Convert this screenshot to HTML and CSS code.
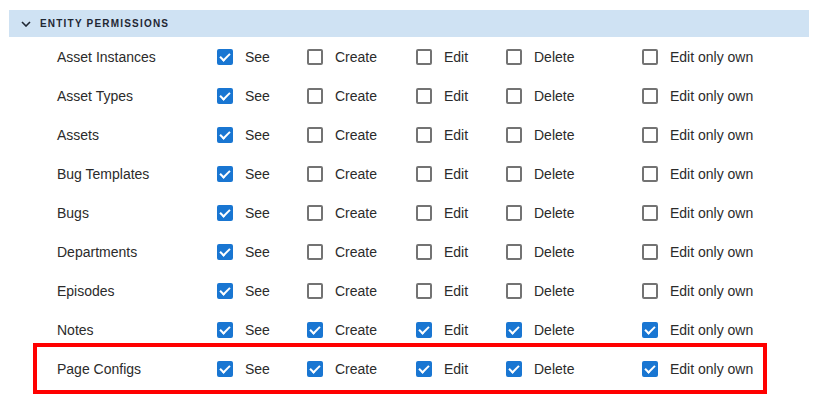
FILE: index.html
```html
<!DOCTYPE html>
<html lang="en">
<head>
  <meta charset="UTF-8">
  <meta name="viewport" content="width=device-width, initial-scale=1.0">
  <title>Entity Permissions</title>
  <link rel="stylesheet" href="styles.css">
</head>
<body>
  <div class="panel">
    <div class="panel-header">
      <svg class="chevron" width="10" height="6" viewBox="0 0 10 6"><path d="M1 1 L5 5 L9 1" fill="none" stroke="#1f2733" stroke-width="1.6"/></svg>
      <span>ENTITY PERMISSIONS</span>
    </div>
    <div class="rows">
      <div class="row">
        <div class="label">Asset Instances</div>
        <label class="perm"><span class="box on"></span>See</label>
        <label class="perm"><span class="box"></span>Create</label>
        <label class="perm"><span class="box"></span>Edit</label>
        <label class="perm"><span class="box"></span>Delete</label>
        <label class="perm"><span class="box"></span>Edit only own</label>
      </div>
      <div class="row">
        <div class="label">Asset Types</div>
        <label class="perm"><span class="box on"></span>See</label>
        <label class="perm"><span class="box"></span>Create</label>
        <label class="perm"><span class="box"></span>Edit</label>
        <label class="perm"><span class="box"></span>Delete</label>
        <label class="perm"><span class="box"></span>Edit only own</label>
      </div>
      <div class="row">
        <div class="label">Assets</div>
        <label class="perm"><span class="box on"></span>See</label>
        <label class="perm"><span class="box"></span>Create</label>
        <label class="perm"><span class="box"></span>Edit</label>
        <label class="perm"><span class="box"></span>Delete</label>
        <label class="perm"><span class="box"></span>Edit only own</label>
      </div>
      <div class="row">
        <div class="label">Bug Templates</div>
        <label class="perm"><span class="box on"></span>See</label>
        <label class="perm"><span class="box"></span>Create</label>
        <label class="perm"><span class="box"></span>Edit</label>
        <label class="perm"><span class="box"></span>Delete</label>
        <label class="perm"><span class="box"></span>Edit only own</label>
      </div>
      <div class="row">
        <div class="label">Bugs</div>
        <label class="perm"><span class="box on"></span>See</label>
        <label class="perm"><span class="box"></span>Create</label>
        <label class="perm"><span class="box"></span>Edit</label>
        <label class="perm"><span class="box"></span>Delete</label>
        <label class="perm"><span class="box"></span>Edit only own</label>
      </div>
      <div class="row">
        <div class="label">Departments</div>
        <label class="perm"><span class="box on"></span>See</label>
        <label class="perm"><span class="box"></span>Create</label>
        <label class="perm"><span class="box"></span>Edit</label>
        <label class="perm"><span class="box"></span>Delete</label>
        <label class="perm"><span class="box"></span>Edit only own</label>
      </div>
      <div class="row">
        <div class="label">Episodes</div>
        <label class="perm"><span class="box on"></span>See</label>
        <label class="perm"><span class="box"></span>Create</label>
        <label class="perm"><span class="box"></span>Edit</label>
        <label class="perm"><span class="box"></span>Delete</label>
        <label class="perm"><span class="box"></span>Edit only own</label>
      </div>
      <div class="row">
        <div class="label">Notes</div>
        <label class="perm"><span class="box on"></span>See</label>
        <label class="perm"><span class="box on"></span>Create</label>
        <label class="perm"><span class="box on"></span>Edit</label>
        <label class="perm"><span class="box on"></span>Delete</label>
        <label class="perm"><span class="box on"></span>Edit only own</label>
      </div>
      <div class="highlight">
        <div class="row">
          <div class="label">Page Configs</div>
          <label class="perm"><span class="box on"></span>See</label>
          <label class="perm"><span class="box on"></span>Create</label>
          <label class="perm"><span class="box on"></span>Edit</label>
          <label class="perm"><span class="box on"></span>Delete</label>
          <label class="perm"><span class="box on"></span>Edit only own</label>
        </div>
      </div>
    </div>
  </div>
</body>
</html>
```

FILE: styles.css
```css
body {
  margin: 0;
  background: #fff;
  font-family: "Liberation Sans", Arial, sans-serif;
  color: #2b2b2b;
}
.panel {
  width: 800px;
  padding: 10px 0 0 9px;
}
.panel-header {
  display: flex;
  align-items: center;
  height: 27px;
  background-color: #cfe2f3;
  padding-left: 12px;
  font-size: 10px;
  font-weight: bold;
  letter-spacing: 1.2px;
  color: #1f2733;
}
.chevron {
  margin-right: 9px;
}
.rows {
  padding-left: 48px;
}
.row {
  display: grid;
  grid-template-columns: 160px 90px 109px 90px 136px 1fr;
  align-items: center;
  height: 39px;
  font-size: 14px;
}
.perm {
  display: flex;
  align-items: center;
  gap: 12px;
}
.box {
  box-sizing: border-box;
  width: 16px;
  height: 16px;
  border: 2px solid #737373;
  border-radius: 2px;
  position: relative;
}
.box.on {
  background-color: #1976d2;
  border-color: #1976d2;
}
.box.on::after {
  content: "";
  position: absolute;
  left: 3px;
  top: 0px;
  width: 4px;
  height: 8px;
  border: solid #fff;
  border-width: 0 2px 2px 0;
  transform: rotate(45deg);
}
.highlight {
  width: 734px;
  box-sizing: border-box;
  margin: -6px 0 0 -24px;
  padding: 2px 0 2px 20px;
  border: 4px solid #ff0000;
}
```
